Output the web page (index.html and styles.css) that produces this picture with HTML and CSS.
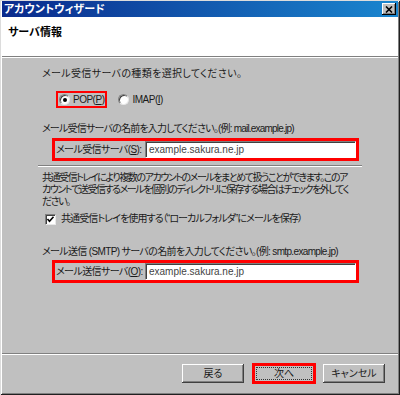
FILE: index.html
```html
<!DOCTYPE html>
<html lang="ja">
<head>
    <meta charset="UTF-8">
    <title>アカウントウィザード</title>
    <link rel="stylesheet" href="styles.css">
</head>
<body>
    <div class="window">
        <div class="titlebar">
            <span>アカウントウィザード</span>
            <span class="close">
                <svg width="8" height="7" viewBox="0 0 8 7"><path d="M1 0.5 L7 6.5 M7 0.5 L1 6.5" stroke="#000" stroke-width="1.6"/></svg>
            </span>
        </div>
        <div class="header">サーバ情報</div>

        <div class="content">
            <p class="text first">メール受信サーバの種類を選択してください。</p>
            <div class="choices">
                <label class="radio mark"><span class="dot checked"></span><span>POP(<u>P</u>)</span></label>
                <label class="radio imap"><span class="dot"></span><span>IMAP(<u>I</u>)</span></label>
            </div>

            <p class="text gap1">メール受信サーバの名前を入力してください。(例: mail.example.jp)</p>
            <div class="field">
                <span class="label">メール受信サーバ(<u>S</u>):</span>
                <span class="input">example.sakura.ne.jp</span>
            </div>

            <div class="rule"></div>

            <p class="text para">共通受信トレイにより複数のアカウントのメールをまとめて扱うことができます。このア<br>カウントで送受信するメールを個別のディレクトリに保存する場合はチェックを外してく<br>ださい。</p>
            <label class="check">
                <span class="box">
                    <svg width="9" height="9" viewBox="0 0 9 9"><path d="M1.5 4 L3.5 6.2 L7.5 1.8" fill="none" stroke="#000" stroke-width="1.6"/></svg>
                </span>
                <span>共通受信トレイを使用する（“ローカルフォルダ”にメールを保存）</span>
            </label>

            <p class="text gap2">メール送信 (SMTP) サーバの名前を入力してください。(例: smtp.example.jp)</p>
            <div class="field second">
                <span class="label">メール送信サーバ(<u>O</u>):</span>
                <span class="input">example.sakura.ne.jp</span>
            </div>
        </div>

        <div class="footer">
            <span class="btn">戻る</span>
            <span class="btn focus"><span>次へ</span></span>
            <span class="btn">キャンセル</span>
        </div>
    </div>
</body>
</html>
```

FILE: styles.css
```css
*{
    margin: 0;
    padding: 0;
    box-sizing: border-box;
}

body{
    width: 400px;
    height: 395px;
    overflow: hidden;
    background: #c0c0c0;
    font-family: "Liberation Sans", "Noto Sans CJK JP", sans-serif;
    font-size: 10px;
    font-feature-settings: "palt";
    color: #1a1a1a;
}

.window{
    width: 400px;
    height: 395px;
    display: flex;
    flex-direction: column;
    padding: 1px 2px 2px 2px;
    background: #c0c0c0;
    box-shadow: inset 1px 1px #dcdcdc, inset -1px -1px #202020, inset 2px 2px #fff, inset -2px -2px #808080;
}

.titlebar{
    height: 16px;
    display: flex;
    align-items: center;
    justify-content: space-between;
    padding: 0 2px 0 2px;
    background: linear-gradient(to right, #0a2a8c, #1a86cf);
    color: #fff;
    font-size: 11px;
    font-weight: bold;
    line-height: 16px;
}

.close{
    width: 14px;
    height: 12px;
    display: flex;
    align-items: center;
    justify-content: center;
    background: #c0c0c0;
    box-shadow: inset -1px -1px #000, inset 1px 1px #fff, inset -2px -2px #808080;
}

.header{
    height: 40px;
    background: #fff;
    border-bottom: 1px solid #808080;
    padding: 9px 0 0 6px;
    font-size: 11px;
    font-weight: bold;
    line-height: 12px;
    color: #000;
}

.content{
    flex: 1;
    border-top: 1px solid #fff;
    padding: 10px 0 0 40px;
}

.text{
    line-height: 12px;
    white-space: nowrap;
}
.first{ letter-spacing: 0.35px; }
.gap1{ margin-top: 15px; letter-spacing: -0.8px; }
.gap2{ margin-top: 21px; letter-spacing: -0.65px; }
.para{ margin-top: 5px; letter-spacing: -1.45px; }

.choices{
    display: flex;
    align-items: center;
    height: 17px;
    margin: 11px 0 0 14px;
}

.radio{
    display: flex;
    align-items: center;
    gap: 3px;
    height: 17px;
    line-height: 12px;
    letter-spacing: -0.5px;
}
.mark{
    border: 2px solid #f00;
    padding: 0 1px 0 1px;
}
.imap{
    margin-left: 11px;
}

.dot{
    position: relative;
    width: 11px;
    height: 11px;
    border-radius: 50%;
    background: #fff;
    border: 1px solid;
    border-color: #808080 #e8e8e8 #e8e8e8 #808080;
    box-shadow: inset 1px 1px #404040;
}
.dot.checked::after{
    content: "";
    position: absolute;
    left: 3px;
    top: 3px;
    width: 4px;
    height: 4px;
    border-radius: 50%;
    background: #000;
}

.field{
    display: flex;
    width: 307px;
    height: 23px;
    margin: 3px 0 0 10px;
    border: 3px solid #f00;
    line-height: 17px;
}
.field.second{
    margin-top: 2px;
}
.field .label{
    width: 90px;
    padding-left: 1px;
    white-space: nowrap;
    letter-spacing: -0.6px;
}
.field .input{
    flex: 1;
    background: #fff;
    border: 1px solid;
    border-color: #808080 #fff #fff #808080;
    box-shadow: inset 1px 1px #404040;
    padding-left: 3px;
    line-height: 15px;
    color: #444;
}

.rule{
    width: 324px;
    margin: 4px 0 0 -4px;
    border-top: 1px solid #808080;
    border-bottom: 1px solid #fff;
}

.check{
    display: flex;
    align-items: center;
    height: 12px;
    margin: 5px 0 0 3px;
    line-height: 12px;
    white-space: nowrap;
    letter-spacing: -0.9px;
}
.check .box{
    width: 11px;
    height: 11px;
    margin-right: 5px;
    display: flex;
    align-items: center;
    justify-content: center;
    background: #fff;
    border: 1px solid;
    border-color: #808080 #e8e8e8 #e8e8e8 #808080;
    box-shadow: inset 1px 1px #404040;
}

.footer{
    height: 40px;
    display: flex;
    align-items: center;
    justify-content: flex-end;
    gap: 8px;
    padding: 0 13px 0 0;
    border-top: 1px solid #808080;
    box-shadow: inset 0 1px #fff;
}

.btn{
    width: 62px;
    height: 19px;
    display: flex;
    align-items: center;
    justify-content: center;
    background: #c0c0c0;
    box-shadow: inset -1px -1px #404040, inset 1px 1px #fff, inset -2px -2px #808080;
    line-height: 12px;
}
.btn.focus{
    width: 64px;
    height: 21px;
    margin-right: -1px;
    border: 3px solid #f00;
    box-shadow: none;
    padding: 1px;
}
.btn.focus span{
    width: 100%;
    height: 100%;
    display: flex;
    align-items: center;
    justify-content: center;
    border: 1px dotted #333;
}
```
